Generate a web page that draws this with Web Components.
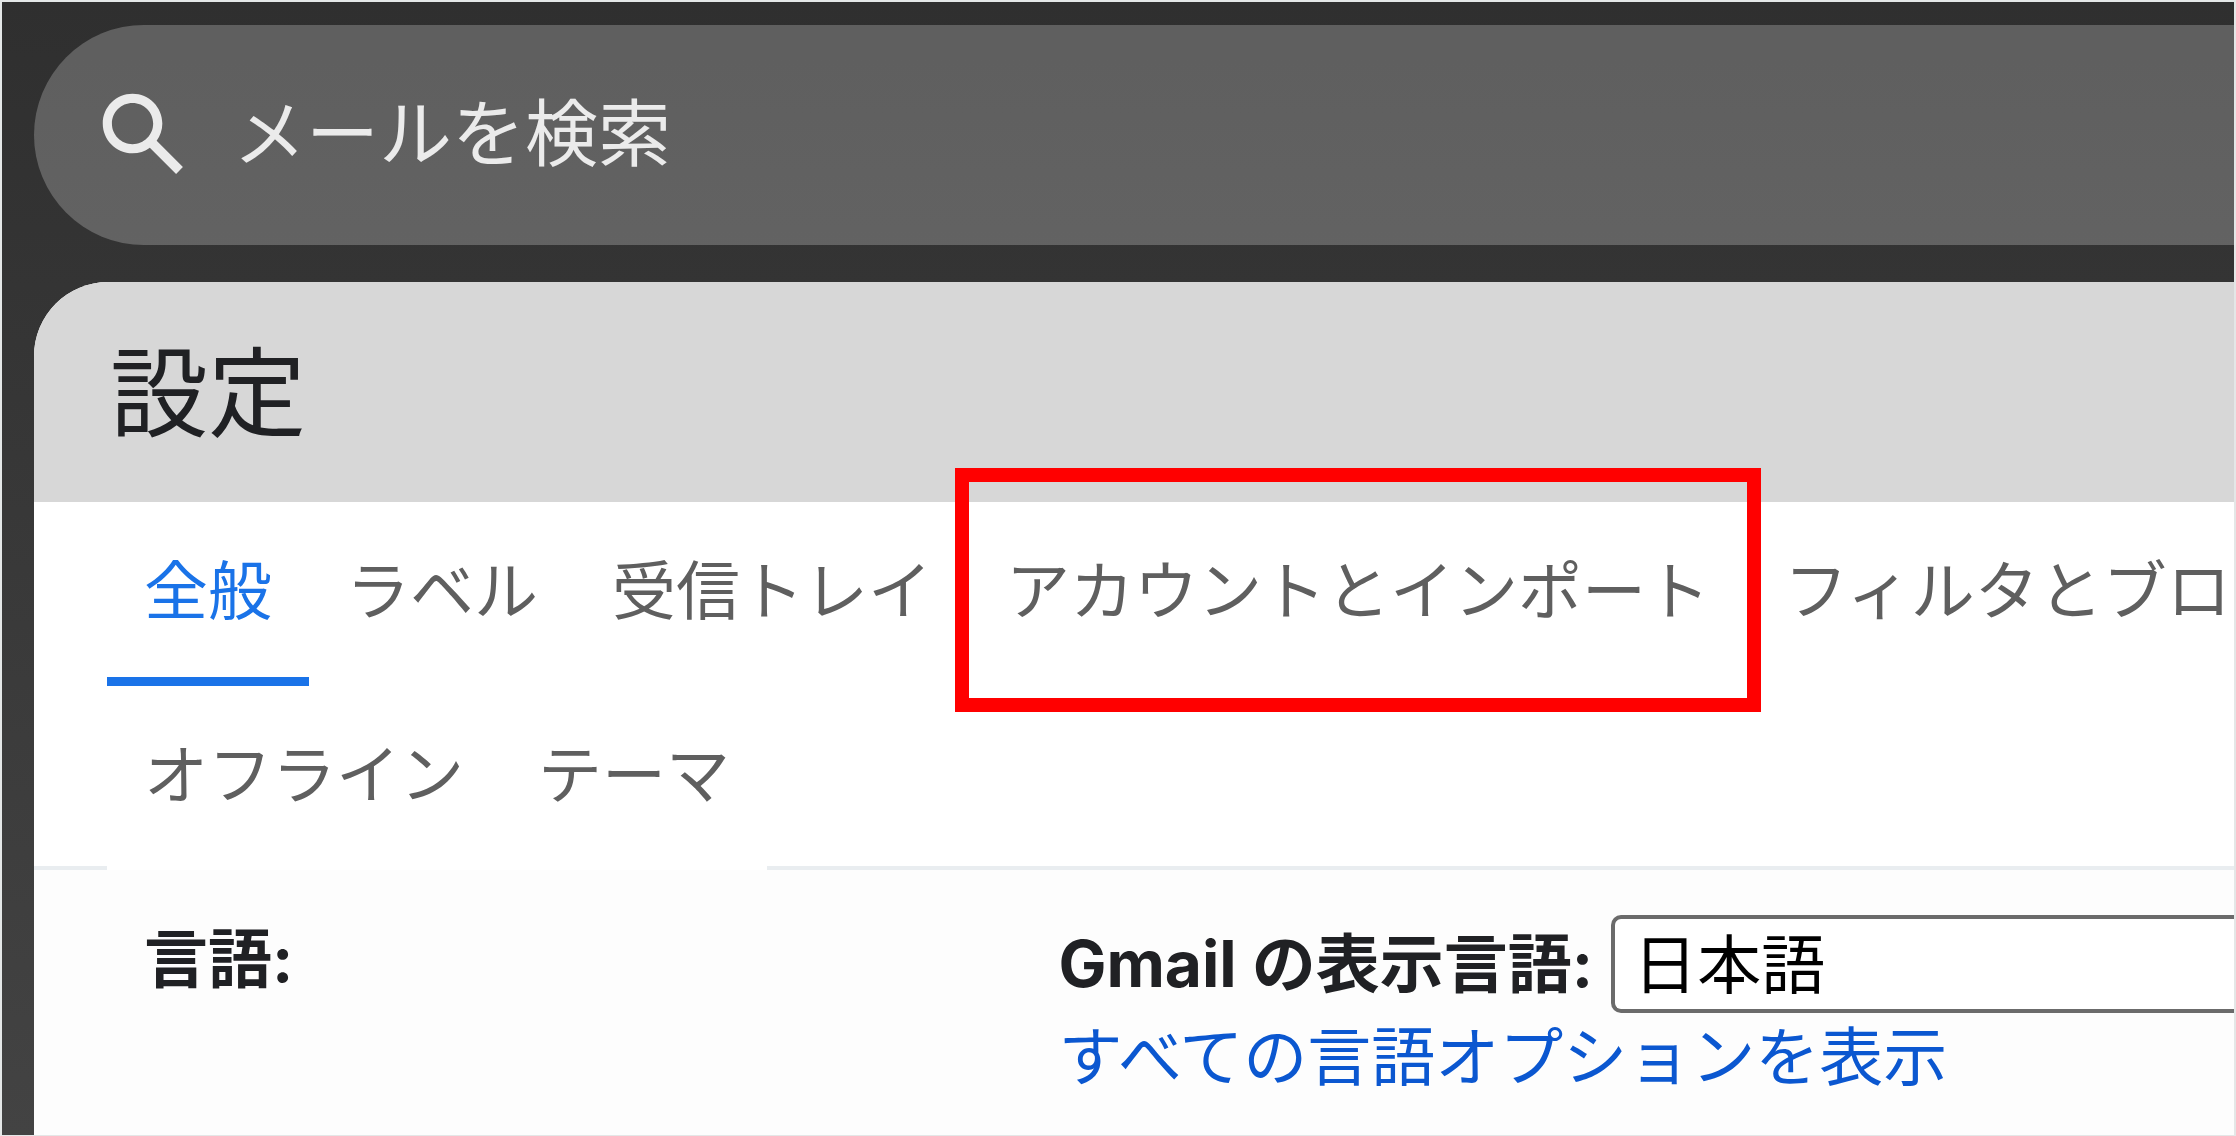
<!DOCTYPE html>
<html lang="ja">
<head>
<meta charset="utf-8">
<title>設定</title>
<style>
html {
  height: 100%;
}
body {
  margin: 0;
  box-sizing: border-box;
  min-height: 100%;
  display: flex;
  padding: 2px 2px 1px;
  background: #e4e7e7;
  overflow: hidden;
  font-family: Inter, "Noto Sans CJK JP", sans-serif;
  color: #202124;
}
</style>
</head>
<body>
<mail-shell>
  <search-bar slot="search" placeholder="メールを検索"></search-bar>
  <settings-card heading="設定">
    <tab-list slot="tabs">
      <tab-item selected>全般</tab-item>
      <tab-item>ラベル</tab-item>
      <tab-item>受信トレイ</tab-item>
      <tab-item marked>アカウントとインポート</tab-item>
      <tab-item>フィルタとブロ</tab-item>
      <tab-item>オフライン</tab-item>
      <tab-item>テーマ</tab-item>
    </tab-list>
    <setting-row>
      <span slot="name">言語:</span>
      <language-setting></language-setting>
    </setting-row>
  </settings-card>
</mail-shell>

<script>
class MailShell extends HTMLElement {
  constructor() {
    super();
    this.attachShadow({ mode: 'open' });
    this.shadowRoot.innerHTML = `
<style>
:host {
  flex: 1;
  min-width: 0;
  display: flex;
  flex-direction: column;
  gap: 37px;
  padding: 23px 0 0 32px;
  background: linear-gradient(#2f2f2f, #434343);
  overflow: hidden;
}
</style>
<slot name="search"></slot>
<slot></slot>`;
  }
}

class SearchBar extends HTMLElement {
  constructor() {
    super();
    this.attachShadow({ mode: 'open' });
  }

  connectedCallback() {
    this.shadowRoot.innerHTML = `
<style>
:host {
  display: block;
}
form {
  display: flex;
  align-items: center;
  gap: 34px;
  height: 220px;
  padding-left: 55px;
  background: rgba(255, 255, 255, 0.23);
  border-radius: 110px 0 0 110px;
}
button {
  display: flex;
  padding: 0;
  border: none;
  background: none;
  cursor: pointer;
}
svg {
  width: 110px;
  height: 110px;
  fill: #ebebeb;
}
input {
  flex: 1;
  min-width: 0;
  height: 112px;
  padding: 0 0 4px;
  border: none;
  outline: none;
  background: none;
  font-family: inherit;
  font-size: 73px;
  color: #ebebeb;
}
input::placeholder {
  color: #ebebeb;
  opacity: 1;
}
</style>
<form role="search">
  <button type="button" aria-label="検索">
    <svg viewBox="0 0 24 24"><path d="M20.49 19l-5.73-5.73C15.53 12.2 16 10.91 16 9.5 16 5.91 13.09 3 9.5 3S3 5.91 3 9.5 5.91 16 9.5 16c1.41 0 2.7-.47 3.77-1.24L19 20.49 20.49 19zM5 9.5C5 7.01 7.01 5 9.5 5S14 7.01 14 9.5 11.99 14 9.5 14 5 11.99 5 9.5z"/></svg>
  </button>
  <input type="text" aria-label="${this.getAttribute('placeholder')}" placeholder="${this.getAttribute('placeholder')}">
</form>`;
  }
}

class SettingsCard extends HTMLElement {
  constructor() {
    super();
    this.attachShadow({ mode: 'open' });
  }

  connectedCallback() {
    this.shadowRoot.innerHTML = `
<style>
:host {
  flex: 1;
  display: flex;
  flex-direction: column;
  background: #fdfdfd;
  border-radius: 74px 0 0 0;
  overflow: hidden;
}
header {
  padding: 40px 0 36px 76px;
  background: #d7d7d7;
}
h1 {
  margin: 0;
  font-size: 98px;
  line-height: 144px;
  font-weight: 400;
}
</style>
<header><h1>${this.getAttribute('heading')}</h1></header>
<slot name="tabs"></slot>
<slot></slot>`;
  }
}

class TabList extends HTMLElement {
  constructor() {
    super();
    this.attachShadow({ mode: 'open' });
    // the last tab of the first line runs out past the card's right edge
    this.shadowRoot.innerHTML = `
<style>
:host {
  display: flex;
  flex-wrap: wrap;
  margin-right: -80px;
  padding-left: 73px;
  background: linear-gradient(#e9edf0, #e9edf0) bottom / 100% 4px no-repeat #fff;
}
</style>
<slot></slot>`;
    this.setAttribute('role', 'tablist');
    this.addEventListener('click', (event) => this.onTabClick(event));
  }

  onTabClick(event) {
    const tab = event.target.closest('tab-item');
    if (!tab) return;
    this.querySelectorAll('tab-item').forEach(item => {
      item.toggleAttribute('selected', item === tab);
    });
  }
}

class TabItem extends HTMLElement {
  constructor() {
    super();
    this.attachShadow({ mode: 'open' });
    this.shadowRoot.innerHTML = `
<style>
:host {
  display: block;
  position: relative;
}
button {
  display: block;
  height: 184px;
  padding: 0 37px 8px;
  border: none;
  border-bottom: 9px solid #fff;
  background: #fff;
  font-family: inherit;
  font-size: 64px;
  color: #5f5f5f;
  white-space: nowrap;
  cursor: pointer;
}
:host([selected]) button {
  border-color: #1a73e8;
  color: #1a73e8;
}
:host([marked])::after {
  content: "";
  position: absolute;
  z-index: 1;
  inset: -34px -14px -26px;
  border: 14px solid #f00;
  pointer-events: none;
}
</style>
<button type="button" role="tab"><slot></slot></button>`;
  }
}

class SettingRow extends HTMLElement {
  constructor() {
    super();
    this.attachShadow({ mode: 'open' });
    this.shadowRoot.innerHTML = `
<style>
:host {
  display: grid;
  grid-template-columns: 7fr 9fr;
  padding: 45px 0 24px 110px;
  font-size: 64px;
  line-height: 88px;
}
.name {
  font-weight: 700;
}
</style>
<div class="name"><slot name="name"></slot></div>
<div><slot></slot></div>`;
  }
}

class LanguageSetting extends HTMLElement {
  constructor() {
    super();
    this.attachShadow({ mode: 'open' });
    this.shadowRoot.innerHTML = `
<style>
:host {
  display: block;
}
.field {
  display: flex;
  align-items: center;
  gap: 18px;
  white-space: nowrap;
}
label {
  font-weight: 700;
}
select {
  appearance: none;
  flex: 1;
  min-width: 0;
  height: 98px;
  padding: 0 18px;
  border: 4px solid #6b6b6b;
  border-right: none;
  border-radius: 10px 0 0 10px;
  background: #fff;
  font-family: inherit;
  font-size: 64px;
  color: #000;
}
a {
  color: #0b57d0;
  text-decoration: none;
}
</style>
<div class="field">
  <label for="language">Gmail の表示言語:</label>
  <select id="language"><option>日本語</option></select>
</div>
<a href="#languages">すべての言語オプションを表示</a>`;
  }
}

customElements.define('mail-shell', MailShell);
customElements.define('search-bar', SearchBar);
customElements.define('settings-card', SettingsCard);
customElements.define('tab-list', TabList);
customElements.define('tab-item', TabItem);
customElements.define('setting-row', SettingRow);
customElements.define('language-setting', LanguageSetting);
</script>
</body>
</html>
